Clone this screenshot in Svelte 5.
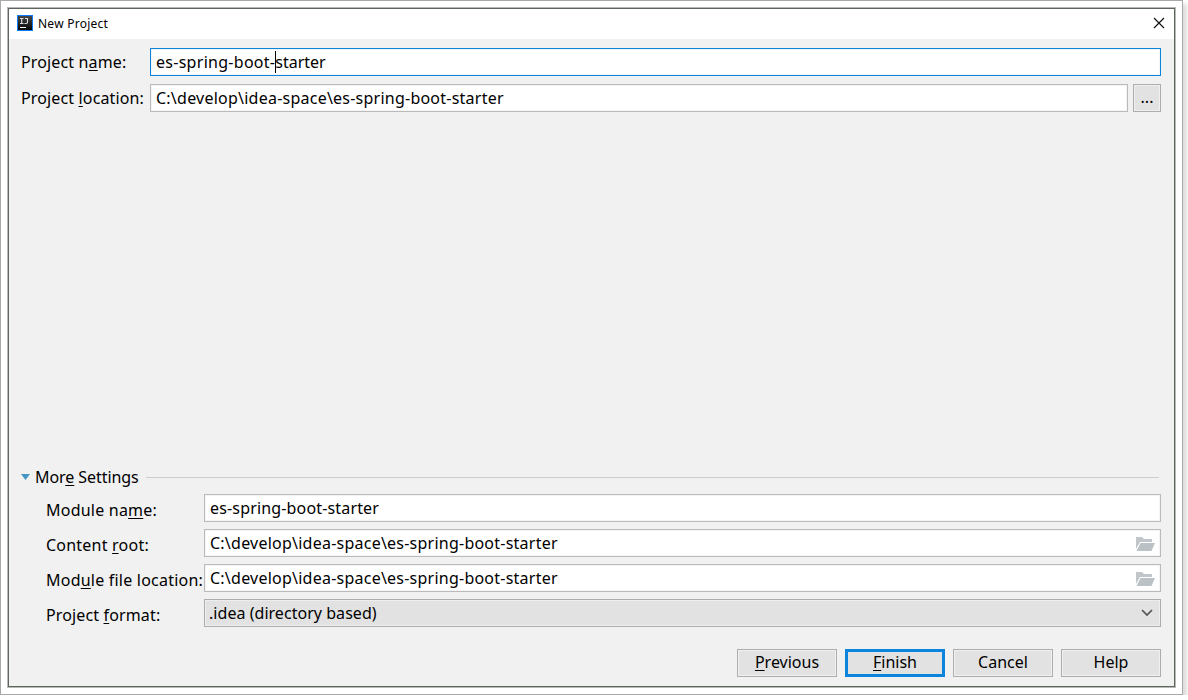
<script>
  const path = 'C:\\develop\\idea-space\\es-spring-boot-starter';
  const fields = [
    { before: 'Module na', key: 'm', after: 'e:', value: 'es-spring-boot-starter', folder: false },
    { before: 'Content ', key: 'r', after: 'oot:', value: path, folder: true },
    { before: 'Mod', key: 'u', after: 'le file location:', value: path, folder: true }
  ];
  const buttons = [
    { key: 'P', text: 'revious' },
    { key: 'F', text: 'inish', primary: true },
    { key: '', text: 'Cancel' },
    { key: '', text: 'Help' }
  ];
</script>

<div class="frame">
  <div class="window">
    <header>
      <svg class="logo" width="16" height="16" viewBox="0 0 16 16">
        <defs><linearGradient id="lg" x1="0" y1="0" x2="0" y2="1"><stop offset="0" stop-color="#484848" /><stop offset="1" stop-color="#050505" /></linearGradient></defs>
        <rect x=".5" y=".5" width="15" height="15" fill="url(#lg)" stroke="#087cfa" />
        <path d="M3 3.500h3.500M4.700 3.500v5M3 8.500h3.500M8 3.500h3M10.500 3v4.300q0 1.200-1.300 1.200H7.500" fill="none" stroke="#ddd" stroke-width="1.1" />
        <path d="M3 12.500h6" stroke="#fff" />
      </svg>
      <span class="title">New Project</span>
      <svg class="close" width="12" height="12" viewBox="0 0 12 12"><path d="M1 1l10 10M11 1L1 11" stroke="#111" stroke-width="1.15" /></svg>
    </header>
    <main>
      <div class="row top">
        <label for="name"><span>Project n<u>a</u>me:</span></label>
        <div class="field focus" id="name"><span class="typed">es-spring-boot-</span><i class="caret"></i><span>starter</span></div>
      </div>
      <div class="row top">
        <label for="loc"><span>Project <u>l</u>ocation:</span></label>
        <div class="field" id="loc"><span class="path">{path}</span></div>
        <button class="more">...</button>
      </div>
      <div class="spacer"></div>
      <div class="section">
        <svg width="9" height="6" viewBox="0 0 9 6"><path d="M0 0h9L4.500 6z" fill="#4596c4" /></svg>
        <span>Mor<u>e</u> Settings</span>
        <hr />
      </div>
      <div class="settings">
        {#each fields as f}
          <div class="row">
            <div class="label"><span>{f.before}<u>{f.key}</u>{f.after}</span></div>
            <div class="field">
              <span class={f.folder ? 'path' : 'module'}>{f.value}</span>
              {#if f.folder}
                <svg class="folder" width="19" height="14" viewBox="0 0 19 14">
                  <path d="M0 12V0h6l2 2h8v3H4z" fill="#c0c6ca" />
                  <path d="M4.500 6H19l-3.500 8H.5z" fill="#bbc2c6" />
                </svg>
              {/if}
            </div>
          </div>
        {/each}
        <div class="row">
          <div class="label format"><span>Project <u>f</u>ormat:</span></div>
          <div class="field combo">
            <span>.idea (directory based)</span>
            <svg class="chev" width="12" height="8" viewBox="0 0 12 8"><path d="M1 1l5 5 5-5" fill="none" stroke="#555" stroke-width="1.7" /></svg>
          </div>
        </div>
      </div>
      <footer>
        {#each buttons as b}
          <button class:primary={b.primary}><span>{#if b.key}<u>{b.key}</u>{/if}{b.text}</span></button>
        {/each}
      </footer>
    </main>
  </div>
</div>

<style>
  :global(body) { background: #fff; overflow: hidden; }
  .frame {
    box-sizing: border-box; width: 1183px; height: 695px; padding: 6px;
    border: 1px solid #a9a9a9; background: #fff; box-shadow: 4px 4px 4px #dedede;
    font: 16px/22px "Noto Sans", "Open Sans", sans-serif; color: #000;
  }
  .window {
    box-sizing: border-box; width: 1169px; height: 681px;
    border: 1px solid #b8bab6; outline: 1px solid #5f665f; outline-offset: -2px;
    padding: 1px; background: #f1f1f1; display: flex; flex-direction: column;
  }
  header { height: 30px; flex: none; background: #fff; display: flex; align-items: center; padding: 0 9px 0 8px; }
  .logo { margin-top: -2px; }
  .title { font-size: 12px; margin-left: 5px; flex: 1; margin-top: -1px; letter-spacing: .25px; }
  .close { margin-top: -2px; }
  main { flex: 1; display: flex; flex-direction: column; padding: 9px 13px 9px 12px; }
  .row { display: flex; height: 28px; }
  .row.top { margin-bottom: 8px; }
  label { width: 129px; flex: none; white-space: nowrap; padding-top: 3px; box-sizing: border-box; letter-spacing: .14px; }
  u { text-decoration-thickness: 1px; text-underline-offset: 2px; text-decoration-skip-ink: none; }
  .field {
    box-sizing: border-box; flex: 1; height: 28px; border: 1px solid #bababa; background: #fff;
    box-shadow: inset 0 0 0 1px #f4f4f4; display: flex; padding: 2px 5px 0; white-space: pre;
  }
  .field.focus { border-color: #0a84dc; }
  .typed { letter-spacing: .28px; }
  .module { letter-spacing: .16px; }
  .path { letter-spacing: .235px; }
  .caret { width: 1px; height: 22px; margin-right: -1px; background: #000; }
  button {
    box-sizing: border-box; width: 100px; height: 28px; padding: 0 0 2px; border: 1px solid #adadad;
    background: #e2e2e2; box-shadow: inset 0 0 0 1px #f0f0f0; font: inherit; color: #000; white-space: nowrap;
  }
  .more { width: 28px; margin-left: 5px; line-height: 20px; }
  .spacer { flex: 1; }
  .section { display: flex; align-items: center; height: 22px; margin-bottom: 6px; letter-spacing: -.07px; }
  .section svg { margin: 0 5px 0 0; }
  hr { flex: 1; border: 0; border-top: 1px solid #cdcdcd; margin: 0 2px 0 7px; }
  .settings { padding-left: 25px; display: flex; flex-direction: column; gap: 7px; }
  .label { width: 158px; flex: none; white-space: nowrap; padding-top: 5px; box-sizing: border-box; letter-spacing: .22px; }
  .label.format { letter-spacing: .14px; }
  .folder { margin: 5px 0 0 auto; }
  .combo { background: #e2e2e2; border-color: #adadad; padding-left: 4px; box-shadow: inset 0 0 0 1px #eee; letter-spacing: .04px; }
  .chev { margin: 7px 2px 0 auto; }
  footer { display: flex; justify-content: flex-end; gap: 8px; margin-top: 22px; }
  .primary { border: 3px solid #0a84dc; box-shadow: none; line-height: 20px; }
</style>
